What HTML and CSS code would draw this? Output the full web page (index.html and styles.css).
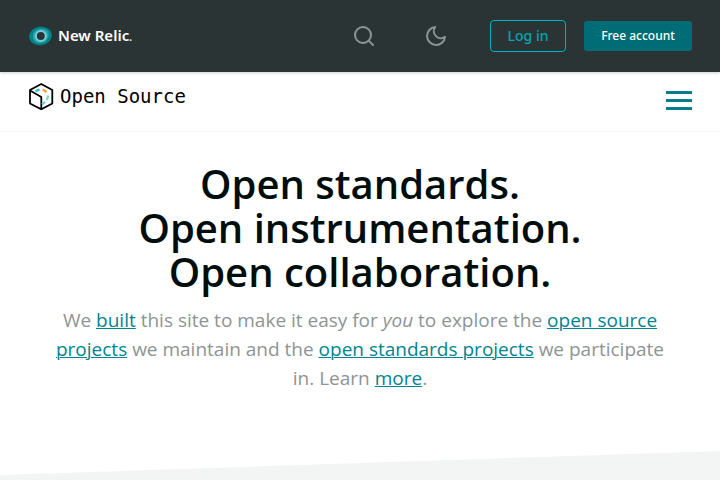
FILE: index.html
```html
<!DOCTYPE html>
<html lang="en">
<head>
<meta charset="utf-8">
<meta name="viewport" content="width=device-width, initial-scale=1">
<title>New Relic Open Source</title>
<link rel="stylesheet" href="styles.css">
</head>
<body>
<header class="global-header">
  <a class="brand" href="#">
    <svg class="brand-mark" width="24" height="20" viewBox="0 0 24 20" aria-hidden="true">
      <ellipse cx="12.5" cy="10" rx="11.4" ry="9.2" fill="#00848c" transform="rotate(-8 12 10)"/>
      <path d="M5 12C4 5 9 3 14 3c6 0 7 3 6.500 7-1 5-5 7-9 7-3 0-6-2-6.500-5z" fill="#2aa3ac"/>
      <circle cx="12.8" cy="10" r="5" fill="#293338" stroke="#70ccd2" stroke-width="2.2"/>
    </svg>
    <span>New Relic<span class="brand-dot">.</span></span>
  </a>
  <div class="actions">
    <button class="icon-button" type="button" aria-label="Search">
      <svg width="24" height="24" viewBox="0 0 24 24" fill="none" stroke="currentColor" stroke-width="2" stroke-linecap="round" stroke-linejoin="round"><circle cx="11" cy="11" r="8"/><path d="m21 21-4.350-4.350"/></svg>
    </button>
    <button class="icon-button" type="button" aria-label="Dark mode">
      <svg width="24" height="24" viewBox="0 0 24 24" fill="none" stroke="currentColor" stroke-width="2" stroke-linecap="round" stroke-linejoin="round"><path d="M21 12.790A9 9 0 1 1 11.210 3 7 7 0 0 0 21 12.790z"/></svg>
    </button>
    <a class="button login" href="#">Log in</a>
    <a class="button signup" href="#">Free account</a>
  </div>
</header>
<nav class="site-nav">
  <a class="site-logo" href="#">
    <svg width="26" height="28" viewBox="0 0 26 28" fill="none" stroke-width="1.8" aria-hidden="true">
      <path d="M13.300 2 24.300 8v13.500L13.300 27.300 2 21.500V8zM2 8.500l11.300 6.500V27" stroke="#000" stroke-linejoin="round"/>
      <path d="m7.500 9.300 4-1.800" stroke="#1dbcd3" stroke-width="2.200"/>
      <path d="m14.800 7.300 3.700 2.700" stroke="#ff9933" stroke-width="2.200"/>
      <path d="m20.200 13.500-1.200 4.500" stroke="#6de0a5" stroke-width="2.200"/>
      <path d="m17 19.800-3 2.500" stroke="#5cd6dc" stroke-width="2.200"/>
    </svg>
    <span>Open Source</span>
  </a>
  <button class="menu" type="button" aria-label="Menu"><span></span><span></span><span></span></button>
</nav>
<main class="hero">
  <h1>Open standards.<br>Open instrumentation.<br>Open collaboration.</h1>
  <p>We <a href="#">built</a> this site to make it easy for <em>you</em> to explore the <a href="#">open source projects</a> we maintain and the <a href="#">open standards projects</a> we participate in. Learn <a href="#">more</a>.</p>
</main>
<div class="slant"></div>
</body>
</html>
```
FILE: styles.css
```css
* { box-sizing: border-box; }

body {
  margin: 0;
  min-height: 100vh;
  display: flex;
  flex-direction: column;
  background: #fff;
  color: #000d0d;
  font-family: "Open Sans", "Noto Sans", sans-serif;
}

button {
  padding: 0;
  border: 0;
  background: none;
  cursor: pointer;
}

svg { display: block; }

.global-header {
  height: 72px;
  padding: 0 28px;
  display: flex;
  align-items: center;
  justify-content: space-between;
  background: #2a3434;
  box-shadow: 0 1px 3px rgba(0, 0, 0, 0.2);
}

.brand {
  display: flex;
  align-items: center;
  gap: 6px;
  color: #fff;
  font-family: "Noto Sans", sans-serif;
  font-size: 15px;
  font-weight: 600;
  line-height: 20px;
  text-decoration: none;
}

.brand-dot { font-size: 10px; }

.actions {
  display: flex;
  align-items: center;
}

.icon-button {
  margin-right: 48px;
  color: #8e9494;
}

.icon-button + .button { margin-left: -6px; }

.button {
  border-radius: 4px;
  font-family: "Noto Sans", sans-serif;
  text-align: center;
  text-decoration: none;
}

.login {
  min-width: 76px;
  padding: 0 16px;
  border: 1px solid #00b3c3;
  color: #00a5b2;
  font-size: 14px;
  font-weight: 500;
  line-height: 30px;
}

.signup {
  min-width: 108px;
  margin-left: 18px;
  padding: 0 16px;
  background: #006c75;
  color: #fff;
  font-size: 12px;
  font-weight: 500;
  line-height: 30px;
  border-radius: 3px;
}

.site-nav {
  height: 60px;
  padding: 10px 28px 0;
  display: flex;
  align-items: flex-start;
  justify-content: space-between;
  border-bottom: 1px solid #f3f4f4;
}

.site-logo {
  display: flex;
  align-items: center;
  gap: 6px;
  color: #000;
  font-family: "DejaVu Sans Mono", monospace;
  font-size: 19px;
  line-height: 28px;
  text-decoration: none;
}

.menu {
  width: 26px;
  margin-top: 9px;
  display: grid;
  gap: 5px;
}

.menu span {
  height: 3px;
  background: #007e8a;
}

.hero {
  padding: 30px 52px 0;
  text-align: center;
}

h1 {
  margin: 0 0 12px;
  font-size: 40px;
  font-weight: 600;
  line-height: 44px;
}

p {
  margin: 0;
  color: #8e9494;
  font-size: 19px;
  line-height: 29px;
}

p a {
  color: #008490;
  text-decoration-thickness: 1px;
}

.slant {
  flex: 1;
  min-height: 29px;
  margin-top: 58px;
  background: #f3f5f5;
  clip-path: polygon(0 24px, 100% 0, 100% 100%, 0 100%);
}
```
